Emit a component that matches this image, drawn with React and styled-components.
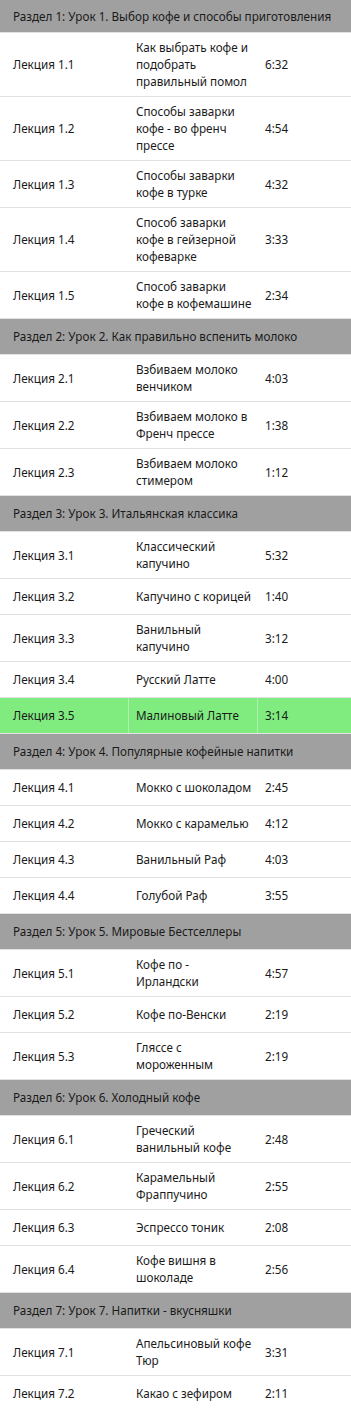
import React from "react";
import styled, { createGlobalStyle } from "styled-components";

const GlobalStyle = createGlobalStyle`
  html, body { margin: 0; padding: 0; background: #ffffff; }
  body { font-family: "Noto Sans", "Open Sans", sans-serif; }
  * { box-sizing: border-box; }
`;

const sections = [
  {
    title: "Раздел 1: Урок 1. Выбор кофе и способы приготовления",
    lessons: [
      ["Лекция 1.1", "Как выбрать кофе и подобрать правильный помол", "6:32"],
      ["Лекция 1.2", "Способы заварки кофе - во френч прессе", "4:54"],
      ["Лекция 1.3", "Способы заварки кофе в турке", "4:32"],
      ["Лекция 1.4", "Способ заварки\nкофе в гейзерной кофеварке", "3:33"],
      ["Лекция 1.5", "Способ заварки\nкофе в кофемашине", "2:34"],
    ],
  },
  {
    title: "Раздел 2: Урок 2. Как правильно вспенить молоко",
    lessons: [
      ["Лекция 2.1", "Взбиваем молоко венчиком", "4:03"],
      ["Лекция 2.2", "Взбиваем молоко в Френч прессе", "1:38"],
      ["Лекция 2.3", "Взбиваем молоко стимером", "1:12"],
    ],
  },
  {
    title: "Раздел 3: Урок 3. Итальянская классика",
    lessons: [
      ["Лекция 3.1", "Классический капучино", "5:32"],
      ["Лекция 3.2", "Капучино с корицей", "1:40"],
      ["Лекция 3.3", "Ванильный капучино", "3:12"],
      ["Лекция 3.4", "Русский Латте", "4:00"],
      ["Лекция 3.5", "Малиновый Латте", "3:14", true],
    ],
  },
  {
    title: "Раздел 4: Урок 4. Популярные кофейные напитки",
    lessons: [
      ["Лекция 4.1", "Мокко с шоколадом", "2:45"],
      ["Лекция 4.2", "Мокко с карамелью", "4:12"],
      ["Лекция 4.3", "Ванильный Раф", "4:03"],
      ["Лекция 4.4", "Голубой Раф", "3:55"],
    ],
  },
  {
    title: "Раздел 5: Урок 5. Мировые Бестселлеры",
    lessons: [
      ["Лекция 5.1", "Кофе по -\nИрландски", "4:57"],
      ["Лекция 5.2", "Кофе по-Венски", "2:19"],
      ["Лекция 5.3", "Гляссе с мороженным", "2:19"],
    ],
  },
  {
    title: "Раздел 6: Урок 6. Холодный кофе",
    lessons: [
      ["Лекция 6.1", "Греческий ванильный кофе", "2:48"],
      ["Лекция 6.2", "Карамельный Фраппучино", "2:55"],
      ["Лекция 6.3", "Эспрессо тоник", "2:08"],
      ["Лекция 6.4", "Кофе вишня в шоколаде", "2:56"],
    ],
  },
  {
    title: "Раздел 7: Урок 7. Напитки - вкусняшки",
    lessons: [
      ["Лекция 7.1", "Апельсиновый кофе Тюр", "3:31"],
      ["Лекция 7.2", "Какао с зефиром", "2:11"],
    ],
  },
];

const Page = styled.div`
  width: 351px;
  color: #1a1a1a;
  font-size: 11.7px;
  line-height: 17px;
`;

const SectionHeader = styled.div`
  height: ${(p) => (p.$first ? "33px" : "36px")};
  background: #a0a0a0;
  display: flex;
  align-items: center;
  padding-left: 13px;
  border-bottom: 1px solid #e2e2e2;
  white-space: nowrap;
`;

const Row = styled.div`
  display: grid;
  grid-template-columns: 129px 129px 1fr;
  min-height: 36px;
  border-bottom: 1px solid #e2e2e2;
  background: ${(p) => (p.$active ? "#80ec80" : "#ffffff")};
`;

const Cell = styled.div`
  display: flex;
  align-items: center;
  padding: 6px ${(p) => (p.$wrap ? "0" : "7px")} 6px ${(p) => (p.$first ? "13px" : "7px")};
  border-right: 1px solid rgba(255, 255, 255, 0.35);
  white-space: pre-line;
  &:last-child { border-right: none; }
`;

export default function App() {
  return (
    <>
      <GlobalStyle />
      <Page>
        {sections.map((s, i) => (
          <section key={s.title}>
            <SectionHeader $first={i === 0}>{s.title}</SectionHeader>
            {s.lessons.map(([name, title, time, active]) => (
              <Row key={name} $active={active}>
                <Cell $first>{name}</Cell>
                <Cell $wrap>{title}</Cell>
                <Cell>{time}</Cell>
              </Row>
            ))}
          </section>
        ))}
      </Page>
    </>
  );
}
